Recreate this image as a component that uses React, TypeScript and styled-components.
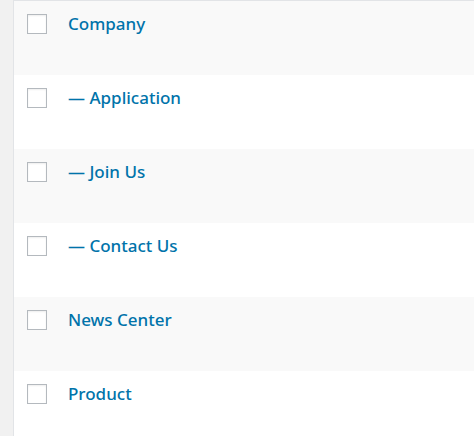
import React from 'react';
import styled, { createGlobalStyle } from 'styled-components';

const GlobalStyle = createGlobalStyle`
  html, body {
    margin: 0;
    padding: 0;
    background: #f1f1f1;
  }
`;

const Page = styled.div`
  width: 474px;
  height: 436px;
  overflow: hidden;
  padding-left: 13px;
  box-sizing: border-box;
`;

const Table = styled.div`
  border-left: 1px solid #e2e4e7;
  border-top: 1px solid #e2e4e7;
  background: #fff;
  display: flex;
  flex-direction: column;
`;

const Row = styled.div<{ $alt: boolean }>`
  height: 74px;
  display: flex;
  align-items: flex-start;
  background: ${(p) => (p.$alt ? '#f9f9f9' : '#fff')};
`;

const CheckCell = styled.div`
  width: 54px;
  padding: 13px 0 0 13px;
  box-sizing: border-box;
`;

const Checkbox = styled.span`
  display: block;
  width: 20px;
  height: 20px;
  box-sizing: border-box;
  border: 1px solid #b4b9be;
  background: #fff;
  box-shadow: inset 0 1px 2px rgba(0, 0, 0, 0.07);
`;

const Title = styled.a`
  margin-top: 11px;
  font-family: 'Noto Sans', 'Open Sans', sans-serif;
  font-size: 17px;
  font-weight: 500;
  line-height: 24px;
  color: #0073aa;
  text-decoration: none;
`;

const pages = [
  'Company',
  '— Application',
  '— Join Us',
  '— Contact Us',
  'News Center',
  'Product',
];

export default function App() {
  return (
    <>
      <GlobalStyle />
      <Page>
        <Table>
          {pages.map((title, i) => (
            <Row key={title} $alt={i % 2 === 0}>
              <CheckCell>
                <Checkbox />
              </CheckCell>
              <Title href='#'>{title}</Title>
            </Row>
          ))}
        </Table>
      </Page>
    </>
  );
}
